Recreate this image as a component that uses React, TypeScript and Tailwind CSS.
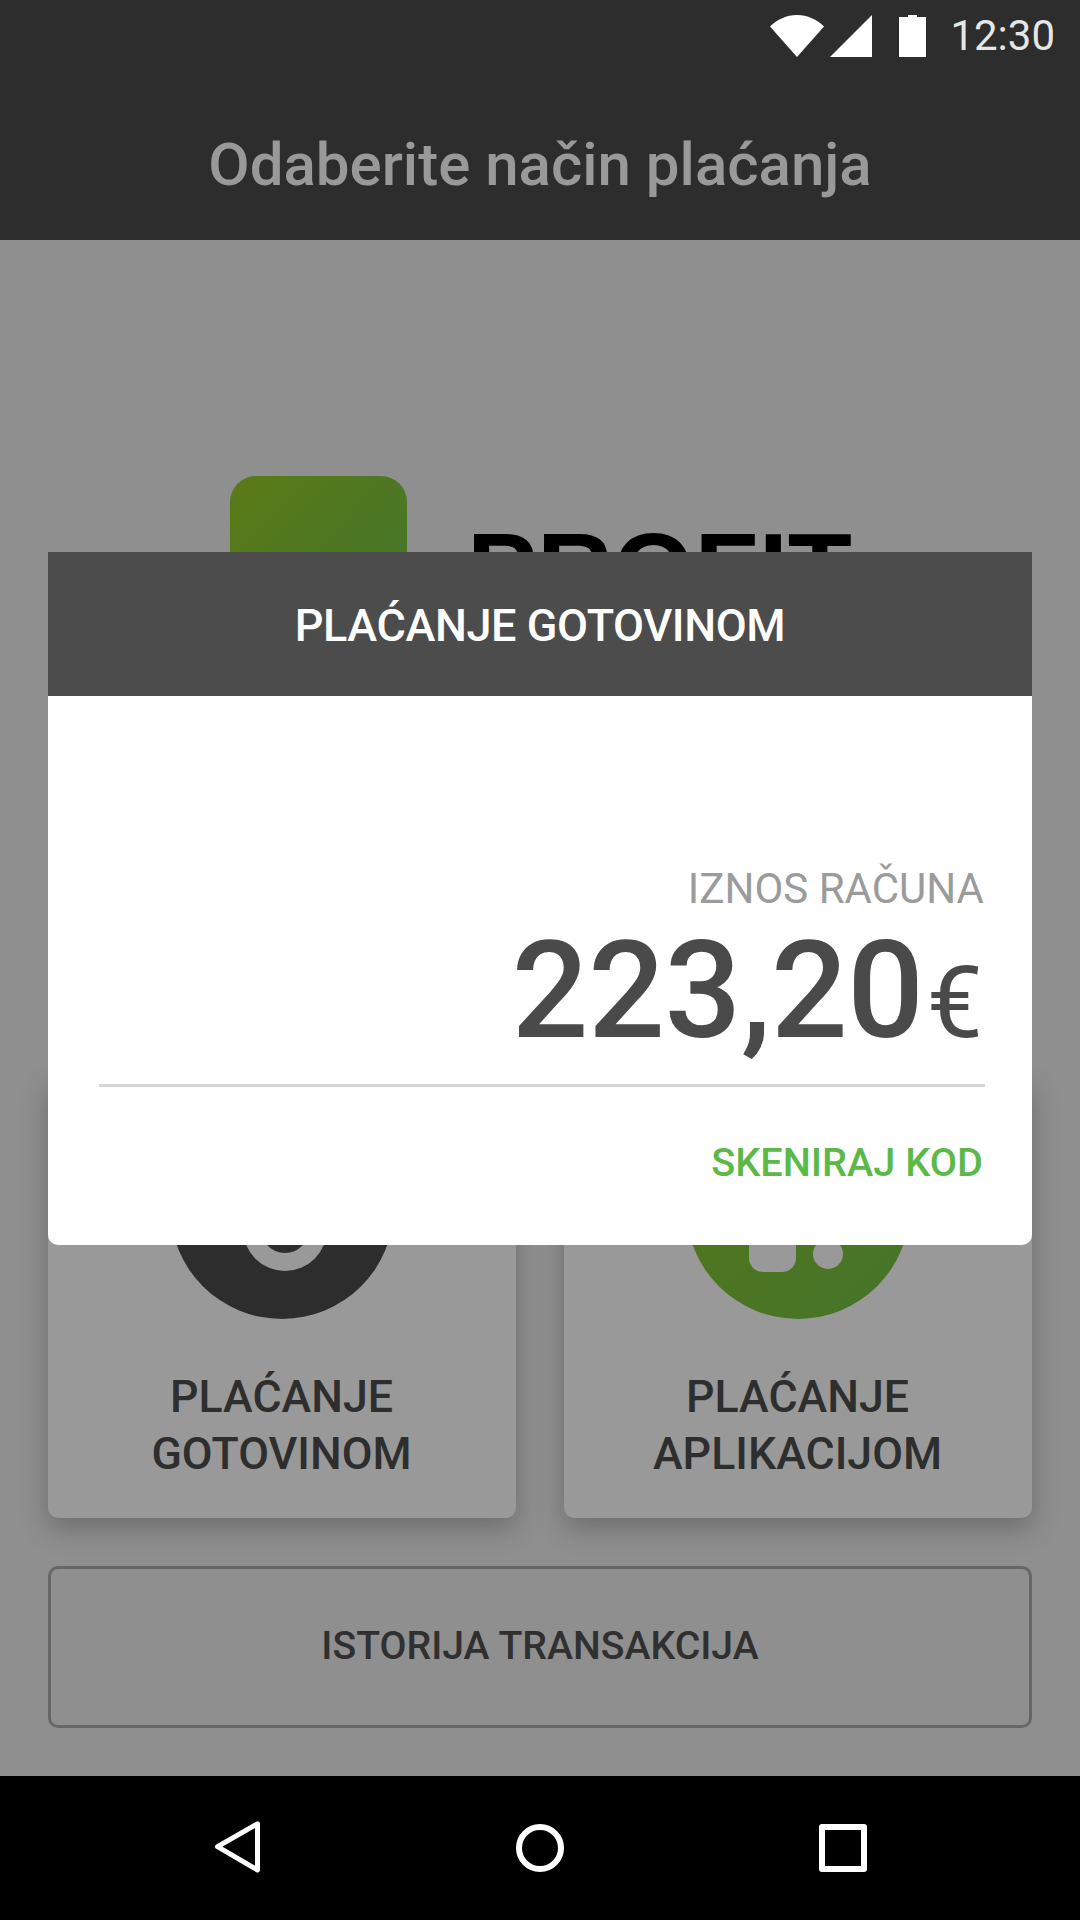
export default function App() {
  return (
    <div className="relative w-[1080px] h-[1920px] flex flex-col overflow-hidden bg-[#8f8f8f] font-['Roboto',sans-serif]">
      {/* Header */}
      <header className="h-[240px] shrink-0 bg-[#2d2d2d] flex flex-col">
        <div className="h-[72px] flex items-center justify-end pr-[25px]">
          <svg width="54" height="42" viewBox="0 0 54 42">
            <path d="M0 11.5C7 4.500 16.500 0 27 0s20 4.500 27 11.500L27 42z" fill="#fff" />
          </svg>
          <svg width="42" height="42" viewBox="0 0 42 42" className="ml-[6px]">
            <path d="M0 42L42 0v42z" fill="#fff" />
          </svg>
          <svg width="27" height="42" viewBox="0 0 27 42" className="ml-[27px]">
            <path d="M9 0h9v2h9v40H0V2h9z" fill="#fff" />
          </svg>
          <span className="ml-[24px] text-[42px] leading-none text-[#e6e6e6]">12:30</span>
        </div>
        <div className="flex-1 flex items-center justify-center pt-[18px]">
          <h1 className="text-[60px] leading-none font-medium text-[#999999]">Odaberite način plaćanja</h1>
        </div>
      </header>

      {/* Main */}
      <main className="flex-1 flex flex-col px-12 pb-12">
        <div className="mt-[236px] ml-[182px] flex items-start gap-[60px]">
          <div className="w-[177px] h-[177px] rounded-[26px] bg-gradient-to-br from-[#5a7a14] to-[#40752c]" />
          <div className="mt-[42px] text-[105px] leading-none font-bold text-black font-['Liberation_Sans',sans-serif]">PROFIT</div>
        </div>

        <div className="mt-auto grid grid-cols-2 gap-12">
          <PayCard line1="PLAĆANJE" line2="GOTOVINOM">
            <svg width="224" height="224" viewBox="0 0 224 224">
              <circle cx="112" cy="112" r="112" fill="#2d2d2d" />
              <circle cx="115" cy="134" r="42" fill="#999999" />
              <circle cx="115" cy="134" r="24" fill="#2d2d2d" />
            </svg>
          </PayCard>
          <PayCard line1="PLAĆANJE" line2="APLIKACIJOM">
            <svg width="224" height="224" viewBox="0 0 224 224">
              <defs>
                <linearGradient id="green" x1="0" y1="0" x2="1" y2="1">
                  <stop offset="0" stopColor="#55751a" />
                  <stop offset="1" stopColor="#44752a" />
                </linearGradient>
              </defs>
              <circle cx="112" cy="112" r="112" fill="url(#green)" />
              <rect x="63" y="100" width="47" height="77" rx="14" fill="#999999" />
              <circle cx="142" cy="159" r="15" fill="#999999" />
            </svg>
          </PayCard>
        </div>

        <button className="mt-12 h-[162px] shrink-0 rounded-[10px] border-[3px] border-[#666666] pb-[2px] text-[39.2px] font-medium text-[#303030]">
          ISTORIJA TRANSAKCIJA
        </button>
      </main>

      {/* Nav bar */}
      <nav className="h-[144px] shrink-0 bg-black flex items-center justify-center gap-[255px]">
        <svg width="48" height="54" viewBox="0 0 48 54">
          <path d="M44.500 2.800L4.500 25.700 44.500 49z" fill="none" stroke="#fff" strokeWidth="5" strokeLinejoin="round" />
        </svg>
        <div className="w-12 h-12 rounded-full border-[6px] border-white" />
        <div className="w-12 h-12 rounded-[3px] border-[6px] border-white" />
      </nav>

      {/* Dialog */}
      <div className="absolute left-12 right-12 top-[552px] h-[693px] bg-white rounded-b-[10px] flex flex-col">
        <div className="h-[144px] shrink-0 bg-[#4c4c4c] flex items-center justify-center pt-[3px]">
          <h2 className="text-[45px] leading-none font-medium tracking-[-0.4px] text-white">PLAĆANJE GOTOVINOM</h2>
        </div>
        <div className="flex-1 flex flex-col items-end pl-[51px] pr-[47px]">
          <div className="mt-[172px] pr-[1px] text-[42px] leading-none text-[#9b9b9b]">IZNOS RAČUNA</div>
          <div className="mt-[14px] pr-[2px] flex items-baseline text-[#4a4a4a]">
            <span className="text-[135px] leading-none font-medium tracking-[-0.3px]">223,20</span>
            <span className="ml-[3px] text-[100px] leading-none">€</span>
          </div>
          <div className="mt-[25px] w-full h-[3px] bg-[#d5d5d5]" />
          <div className="mt-[56px] pr-[2px] text-[39.7px] leading-none font-medium text-[#5cb947]">SKENIRAJ KOD</div>
        </div>
      </div>
    </div>
  );
}

function PayCard({ line1, line2, children }: { line1: string; line2: string; children: React.ReactNode }) {
  return (
    <div className="h-[440px] rounded-[10px] bg-[#999999] shadow-[0_10px_28px_rgba(0,0,0,0.25)] flex flex-col items-center pt-[17px]">
      {children}
      <div className="mt-[50px] pr-[1px] text-center text-[44.7px] leading-[57px] font-medium text-[#2e2e2e]">
        {line1}
        <br />
        {line2}
      </div>
    </div>
  );
}
